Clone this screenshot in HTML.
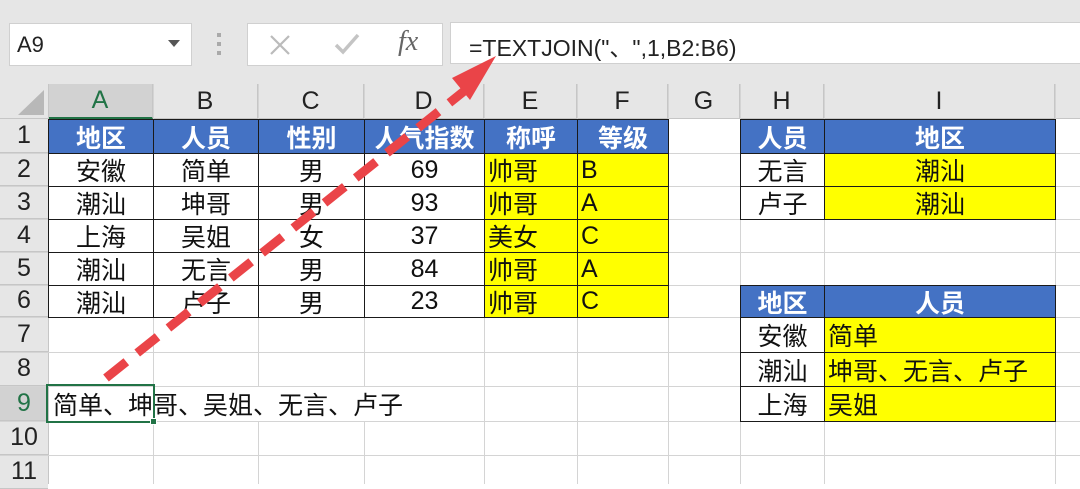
<!DOCTYPE html>
<html><head><meta charset="utf-8"><style>
body{margin:0;width:1080px;height:484px;overflow:hidden;background:#fff;position:relative;font-family:"Liberation Sans","Noto Sans CJK SC",sans-serif;}
.a{position:absolute;box-sizing:border-box;}
.c{position:absolute;box-sizing:border-box;display:flex;align-items:center;justify-content:center;font-size:25px;color:#111;white-space:nowrap;}
.l{justify-content:flex-start;padding-left:3px;}
.h{background:#4472c4;color:#fff;font-weight:bold;border:1px solid #1a1a1a;}
.w{border:1px solid #1a1a1a;background:#fff;}
.y{background:#ffff00;border:1px solid #1a1a1a;}
.vl{position:absolute;width:1px;background:#d4d4d4;top:84px;height:400px;}
.hl{position:absolute;height:1px;background:#d4d4d4;left:0;width:1080px;}
.ch{position:absolute;top:84px;height:35px;display:flex;align-items:center;justify-content:center;font-size:25px;color:#222;border-right:1px solid #c6c6c6;box-sizing:border-box;}
.rh{position:absolute;left:0;width:48px;display:flex;align-items:center;justify-content:center;font-size:25px;color:#222;background:#e6e6e6;border-bottom:1px solid #c6c6c6;box-sizing:border-box;}
</style></head><body>
<!-- toolbar -->
<div class="a" style="left:0;top:0;width:1080px;height:84px;background:#e6e6e6;"></div>
<div class="a" style="left:9px;top:23px;width:183px;height:43px;background:#fff;border:1px solid #d0d0d0;font-size:22px;padding:8px 0 0 7px;color:#222;">A9</div>
<div class="a" style="left:168px;top:40px;width:0;height:0;border-left:6px solid transparent;border-right:6px solid transparent;border-top:7px solid #555;"></div>
<div class="a" style="left:217px;top:33px;width:4px;height:4px;background:#aaa;"></div>
<div class="a" style="left:217px;top:42px;width:4px;height:4px;background:#aaa;"></div>
<div class="a" style="left:217px;top:51px;width:4px;height:4px;background:#aaa;"></div>
<div class="a" style="left:247px;top:23px;width:196px;height:43px;background:#fff;border:1px solid #d0d0d0;"></div>
<svg class="a" style="left:268px;top:33px" width="24" height="24"><path d="M3 3L21 21M21 3L3 21" stroke="#bbb" stroke-width="2.2"/></svg>
<svg class="a" style="left:333px;top:31px" width="28" height="26"><path d="M3 14L10 21L25 4" stroke="#c4c4c4" stroke-width="3.5" fill="none"/></svg>
<div class="a" style="left:398px;top:26px;font-family:'Liberation Serif',serif;font-style:italic;font-size:28px;color:#666;">fx</div>
<div class="a" style="left:450px;top:22px;width:640px;height:42px;background:#fff;border:1px solid #d0d0d0;font-size:23px;padding:6px 0 0 18px;color:#222;">=TEXTJOIN("、",1,B2:B6)</div>
<!-- column header -->
<div class="a" style="left:0;top:84px;width:1080px;height:35px;background:#e6e6e6;border-bottom:1px solid #c6c6c6;"></div>
<div class="a" style="left:0;top:84px;width:48px;height:35px;"><svg width="48" height="35"><path d="M44 6L44 31L18 31Z" fill="#b8b8b8"/></svg></div>
<div class="ch" style="left:48px;width:105px;background:#d2d2d2;color:#217346;border-bottom:2px solid #217346;">A</div>
<div class="ch" style="left:153px;width:105px;">B</div>
<div class="ch" style="left:258px;width:106px;">C</div>
<div class="ch" style="left:364px;width:120px;">D</div>
<div class="ch" style="left:484px;width:93px;">E</div>
<div class="ch" style="left:577px;width:91px;">F</div>
<div class="ch" style="left:668px;width:72px;">G</div>
<div class="ch" style="left:740px;width:84px;">H</div>
<div class="ch" style="left:824px;width:231px;">I</div>
<!-- row header -->
<div class="rh" style="top:119px;height:34px;">1</div>
<div class="rh" style="top:153px;height:33px;">2</div>
<div class="rh" style="top:186px;height:33px;">3</div>
<div class="rh" style="top:219px;height:33px;">4</div>
<div class="rh" style="top:252px;height:33px;">5</div>
<div class="rh" style="top:285px;height:32px;">6</div>
<div class="rh" style="top:317px;height:35px;">7</div>
<div class="rh" style="top:352px;height:34px;">8</div>
<div class="rh" style="top:386px;height:35px;background:#d2d2d2;color:#217346;">9</div>
<div class="rh" style="top:421px;height:34px;">10</div>
<div class="rh" style="top:455px;height:34px;">11</div>
<div class="a" style="left:48px;top:84px;width:1px;height:400px;background:#c6c6c6;"></div>
<!-- gridlines -->
<div class="vl" style="left:153px"></div><div class="vl" style="left:258px"></div><div class="vl" style="left:364px"></div><div class="vl" style="left:484px"></div><div class="vl" style="left:577px"></div><div class="vl" style="left:668px"></div><div class="vl" style="left:740px"></div><div class="vl" style="left:824px"></div><div class="vl" style="left:1055px"></div>
<div class="hl" style="top:153px"></div><div class="hl" style="top:186px"></div><div class="hl" style="top:219px"></div><div class="hl" style="top:252px"></div><div class="hl" style="top:285px"></div><div class="hl" style="top:317px"></div><div class="hl" style="top:352px"></div><div class="hl" style="top:386px"></div><div class="hl" style="top:421px"></div><div class="hl" style="top:455px"></div>
<!-- main table -->
<div class="c h" style="left:48px;top:119px;width:106px;height:35px;">地区</div>
<div class="c h" style="left:153px;top:119px;width:106px;height:35px;">人员</div>
<div class="c h" style="left:258px;top:119px;width:107px;height:35px;">性别</div>
<div class="c h" style="left:364px;top:119px;width:121px;height:35px;">人气指数</div>
<div class="c h" style="left:484px;top:119px;width:94px;height:35px;">称呼</div>
<div class="c h" style="left:577px;top:119px;width:92px;height:35px;">等级</div>

<div class="c w" style="left:48px;top:153px;width:106px;height:34px;">安徽</div>
<div class="c w" style="left:153px;top:153px;width:106px;height:34px;">简单</div>
<div class="c w" style="left:258px;top:153px;width:107px;height:34px;">男</div>
<div class="c w" style="left:364px;top:153px;width:121px;height:34px;">69</div>
<div class="c y l" style="left:484px;top:153px;width:94px;height:34px;">帅哥</div>
<div class="c y l" style="left:577px;top:153px;width:92px;height:34px;">B</div>

<div class="c w" style="left:48px;top:186px;width:106px;height:34px;">潮汕</div>
<div class="c w" style="left:153px;top:186px;width:106px;height:34px;">坤哥</div>
<div class="c w" style="left:258px;top:186px;width:107px;height:34px;">男</div>
<div class="c w" style="left:364px;top:186px;width:121px;height:34px;">93</div>
<div class="c y l" style="left:484px;top:186px;width:94px;height:34px;">帅哥</div>
<div class="c y l" style="left:577px;top:186px;width:92px;height:34px;">A</div>

<div class="c w" style="left:48px;top:219px;width:106px;height:34px;">上海</div>
<div class="c w" style="left:153px;top:219px;width:106px;height:34px;">吴姐</div>
<div class="c w" style="left:258px;top:219px;width:107px;height:34px;">女</div>
<div class="c w" style="left:364px;top:219px;width:121px;height:34px;">37</div>
<div class="c y l" style="left:484px;top:219px;width:94px;height:34px;">美女</div>
<div class="c y l" style="left:577px;top:219px;width:92px;height:34px;">C</div>

<div class="c w" style="left:48px;top:252px;width:106px;height:34px;">潮汕</div>
<div class="c w" style="left:153px;top:252px;width:106px;height:34px;">无言</div>
<div class="c w" style="left:258px;top:252px;width:107px;height:34px;">男</div>
<div class="c w" style="left:364px;top:252px;width:121px;height:34px;">84</div>
<div class="c y l" style="left:484px;top:252px;width:94px;height:34px;">帅哥</div>
<div class="c y l" style="left:577px;top:252px;width:92px;height:34px;">A</div>

<div class="c w" style="left:48px;top:285px;width:106px;height:33px;">潮汕</div>
<div class="c w" style="left:153px;top:285px;width:106px;height:33px;">卢子</div>
<div class="c w" style="left:258px;top:285px;width:107px;height:33px;">男</div>
<div class="c w" style="left:364px;top:285px;width:121px;height:33px;">23</div>
<div class="c y l" style="left:484px;top:285px;width:94px;height:33px;">帅哥</div>
<div class="c y l" style="left:577px;top:285px;width:92px;height:33px;">C</div>
<!-- right table 1 -->
<div class="c h" style="left:740px;top:119px;width:85px;height:35px;">人员</div>
<div class="c h" style="left:824px;top:119px;width:232px;height:35px;">地区</div>
<div class="c w" style="left:740px;top:153px;width:85px;height:34px;">无言</div>
<div class="c y" style="left:824px;top:153px;width:232px;height:34px;">潮汕</div>
<div class="c w" style="left:740px;top:186px;width:85px;height:34px;">卢子</div>
<div class="c y" style="left:824px;top:186px;width:232px;height:34px;">潮汕</div>
<!-- right table 2 -->
<div class="c h" style="left:740px;top:285px;width:85px;height:33px;">地区</div>
<div class="c h" style="left:824px;top:285px;width:232px;height:33px;">人员</div>
<div class="c w" style="left:740px;top:317px;width:85px;height:36px;">安徽</div>
<div class="c y l" style="left:824px;top:317px;width:232px;height:36px;">简单</div>
<div class="c w" style="left:740px;top:352px;width:85px;height:35px;">潮汕</div>
<div class="c y l" style="left:824px;top:352px;width:232px;height:35px;">坤哥、无言、卢子</div>
<div class="c w" style="left:740px;top:386px;width:85px;height:36px;">上海</div>
<div class="c y l" style="left:824px;top:386px;width:232px;height:36px;">吴姐</div>
<!-- A9 -->
<div class="a" style="left:49px;top:387px;width:380px;height:34px;background:#fff;"></div>
<div class="c l" style="left:48px;top:386px;height:35px;padding-left:5px;">简单、坤哥、吴姐、无言、卢子</div>
<div class="a" style="left:46px;top:384px;width:109px;height:39px;border:2px solid #217346;"></div>
<div class="a" style="left:150px;top:418px;width:7px;height:7px;background:#217346;border:1px solid #fff;"></div>
<!-- arrow -->
<svg class="a" style="left:0;top:0" width="1080" height="484">
<line x1="106" y1="378" x2="478" y2="80" stroke="#ea4448" stroke-width="9" stroke-dasharray="26,14"/>
<path d="M496 56L470 100L452 78Z" fill="#ea4448"/>
</svg>
</body></html>
